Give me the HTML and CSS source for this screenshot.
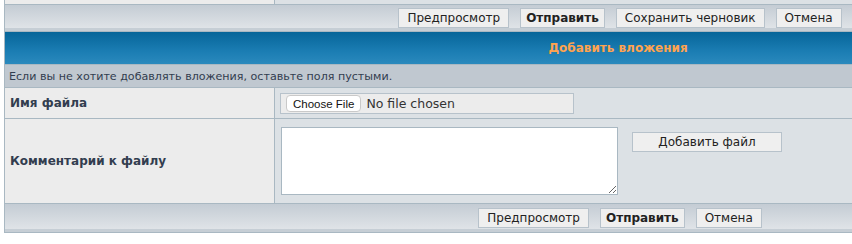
FILE: index.html
```html
<!DOCTYPE html>
<html lang="ru">
<head>
  <meta charset="UTF-8">
  <title>Добавить вложения</title>
  <link rel="stylesheet" href="styles.css">
</head>
<body>
  <table class="tablebg">
    <tr class="prev-row">
      <td class="row1 col-left"></td>
      <td class="row2"></td>
    </tr>
    <tr>
      <td class="cat-bottom" colspan="2">
        <div class="buttons">
          <button class="btnlite">Предпросмотр</button>
          <button class="btnmain">Отправить</button>
          <button class="btnlite">Сохранить черновик</button>
          <button class="btnlite">Отмена</button>
        </div>
      </td>
    </tr>
    <tr>
      <th colspan="2">Добавить вложения</th>
    </tr>
    <tr>
      <td class="row3" colspan="2"><span class="gensmall">Если вы не хотите добавлять вложения, оставьте поля пустыми.</span></td>
    </tr>
    <tr>
      <td class="row1 label">Имя файла</td>
      <td class="row2 file-cell">
        <div class="file-box">
          <span class="file-btn">Choose File</span>
          <span class="file-name">No file chosen</span>
        </div>
      </td>
    </tr>
    <tr>
      <td class="row1 label">Комментарий к файлу</td>
      <td class="row2 comment-cell">
        <div class="comment-wrap">
          <textarea class="post"></textarea>
          <button class="btnlite add-file">Добавить файл</button>
        </div>
      </td>
    </tr>
    <tr>
      <td class="cat-bottom bottom" colspan="2">
        <div class="buttons">
          <button class="btnlite">Предпросмотр</button>
          <button class="btnmain">Отправить</button>
          <button class="btnlite">Отмена</button>
        </div>
      </td>
    </tr>
  </table>
</body>
</html>
```

FILE: styles.css
```css
html, body {
  overflow: hidden;
}
body {
  margin: 0;
  background: #fff;
  color: #323d4f;
  font-family: "DejaVu Sans", Verdana, sans-serif;
  font-size: 11px;
}
.tablebg {
  width: 1228px;
  margin: -1px 0 0 4px;
  border-collapse: separate;
  border-spacing: 1px;
  background-color: #a9b8c2;
}
td, th {
  padding: 0;
}
.row1 {
  background-color: #ececec;
}
.row2 {
  background-color: #dce1e5;
}
.row3 {
  background-color: #c0c8d0;
  height: 22px;
  padding: 0 4px;
}
.gensmall {
  font-size: 11.1px;
}
.col-left {
  width: 269px;
}
.prev-row td {
  height: 4px;
}
.cat-bottom {
  height: 26px;
  background: linear-gradient(to bottom, #c4ccd4, #dfe3e7 88%, #c6ced5 88%);
}
.cat-bottom.bottom {
  height: 28px;
}
.buttons {
  display: flex;
  justify-content: center;
  align-items: center;
  gap: 11px;
  padding-left: 4px;
}
button {
  font-family: "DejaVu Sans", Verdana, sans-serif;
  font-size: 12px;
  color: #222;
  height: 20px;
  padding: 0 8px;
  border: 1px solid #b7c2cb;
  background-color: #efefef;
  border-radius: 0;
  line-height: 18px;
}
.btnmain {
  font-weight: bold;
  padding: 0 5px;
}
th {
  height: 32px;
  padding: 0 5px;
  color: #ffa34f;
  font-size: 12px;
  font-weight: bold;
  white-space: nowrap;
  background: linear-gradient(to bottom, #066599, #1b7db3 60%, #2a89bd);
}
.label {
  padding: 0 4px 0 5px;
  font-weight: bold;
  font-size: 12px;
}
.file-cell {
  height: 30px;
  padding: 0 4px 0 5px;
}
.file-box {
  display: flex;
  align-items: center;
  width: 294px;
  height: 21px;
  box-sizing: border-box;
  border: 1px solid #b7c2cb;
  background-color: #ececec;
  padding-left: 5px;
}
.file-btn {
  display: inline-block;
  height: 17px;
  line-height: 16px;
  box-sizing: border-box;
  padding: 0 6px;
  border: 1px solid #c9c9c9;
  border-radius: 4px;
  background: #fff;
  color: #111;
  font-family: "Liberation Sans", Arial, sans-serif;
  font-size: 11.5px;
}
.file-name {
  margin-left: 5px;
  font-size: 12.5px;
  color: #333;
}
.comment-cell {
  height: 84px;
  padding: 0 4px 0 6px;
}
.comment-wrap {
  display: flex;
  align-items: flex-start;
}
textarea.post {
  width: 337px;
  height: 68px;
  box-sizing: border-box;
  margin: 0;
  border: 1px solid #a9b8c2;
  background: #fff;
}
.add-file {
  width: 150px;
  margin: 5px 0 0 14px;
}
```
